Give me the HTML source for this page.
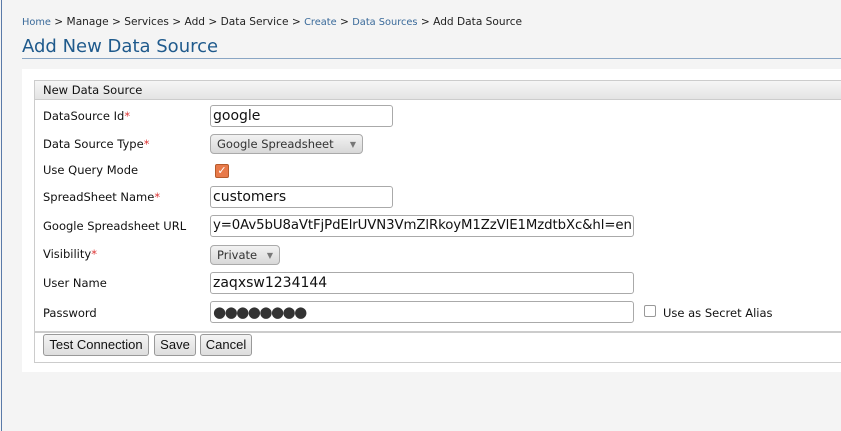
<!DOCTYPE html>
<html><head><style>
body{margin:0;width:841px;height:431px;background:#f4f4f4;font-family:"DejaVu Sans",sans-serif;position:relative;overflow:hidden}
.lb{position:absolute;left:1px;top:0;width:1px;height:431px;background:#5a7aa8}
.bc{position:absolute;left:22px;top:16px;font-size:10.6px;color:#222}
.bc a{color:#3a6a9a;text-decoration:none;font-size:9.8px}
h1{position:absolute;left:22px;top:36px;margin:0;font-size:18px;font-weight:normal;color:#1f5a8c}
.ul{position:absolute;left:22px;top:58px;width:819px;height:1px;background:#8aa6c4}
.panel{position:absolute;left:22px;top:69px;width:819px;height:303px;background:#fff}
.box{position:absolute;left:34px;top:80px;width:810px;height:281px;border:1px solid #ccc;border-right:none}
.hd{position:absolute;left:0;top:0;right:0;height:18px;background:linear-gradient(#f6f6f6,#e4e4e4);border-bottom:1px solid #ccc;font-size:11.5px;padding-left:8px;line-height:19px;color:#111}
.lab{position:absolute;left:8px;font-size:11.5px;color:#111}
.lab i{color:#d33;font-style:normal}
.in{position:absolute;left:175px;border:1px solid #aaa;border-radius:3px;font-size:14px;line-height:20px;padding-left:2px;color:#111;overflow:hidden;white-space:nowrap;box-sizing:border-box;height:22px}
.sel{position:absolute;left:175px;height:20px;border:1px solid #aaa;border-radius:4px;background:linear-gradient(#f2f2f2,#d8d8d8);font-size:11.5px;line-height:19px;padding-left:6px;color:#333;box-sizing:border-box}
.sel span{position:absolute;right:6px;top:0;font-size:8px;color:#777}
.sep{position:absolute;left:0;right:0;top:250px;height:2px;background:#ccc}
.btn{position:absolute;top:253px;height:22px;border:1px solid #999;border-radius:3px;background:linear-gradient(#f4f4f4,#ddd);font-family:"Liberation Sans",sans-serif;font-size:13px;line-height:20px;text-align:center;color:#111;box-sizing:border-box}
</style></head><body>
<div class="lb"></div>
<div class="bc"><a>Home</a> &gt; Manage &gt; Services &gt; Add &gt; Data Service &gt; <a>Create</a> &gt; <a>Data Sources</a> &gt; Add Data Source</div>
<h1>Add New Data Source</h1>
<div class="ul"></div>
<div class="panel"></div>
<div class="box">
<div class="hd">New Data Source</div>
<div class="lab" style="top:28px">DataSource Id<i>*</i></div>
<div class="in" style="top:24px;width:183px">google</div>
<div class="lab" style="top:56px">Data Source Type<i>*</i></div>
<div class="sel" style="top:53px;width:153px">Google Spreadsheet<span>▼</span></div>
<div class="lab" style="top:82px">Use Query Mode</div>
<div style="position:absolute;left:180px;top:83px;width:12px;height:12px;border:1px solid #b65a2a;border-radius:2px;background:#e87a4a;color:#fff;font-size:11px;line-height:12px;text-align:center">✓</div>
<div class="lab" style="top:109px">SpreadSheet Name<i>*</i></div>
<div class="in" style="top:105px;width:183px">customers</div>
<div class="lab" style="top:138px">Google Spreadsheet URL</div>
<div class="in" style="top:134px;width:424px;font-size:13.3px;letter-spacing:-0.1px">y=0Av5bU8aVtFjPdElrUVN3VmZlRkoyM1ZzVlE1MzdtbXc&amp;hl=en</div>
<div class="lab" style="top:166px">Visibility<i>*</i></div>
<div class="sel" style="top:164px;width:70px">Private<span>▼</span></div>
<div class="lab" style="top:195px">User Name</div>
<div class="in" style="top:191px;width:424px">zaqxsw1234144</div>
<div class="lab" style="top:225px">Password</div>
<div class="in" style="top:220px;width:424px;font-size:15px;letter-spacing:-1.5px;color:#333">●●●●●●●●</div>
<div style="position:absolute;left:609px;top:224px;width:10px;height:10px;border:1px solid #999;border-radius:2px"></div>
<div class="lab" style="top:225px;left:628px">Use as Secret Alias</div>
<div class="sep"></div>
<div class="btn" style="left:8px;width:106px">Test Connection</div>
<div class="btn" style="left:119px;width:42px">Save</div>
<div class="btn" style="left:165px;width:52px">Cancel</div>
</div>
</body></html>
